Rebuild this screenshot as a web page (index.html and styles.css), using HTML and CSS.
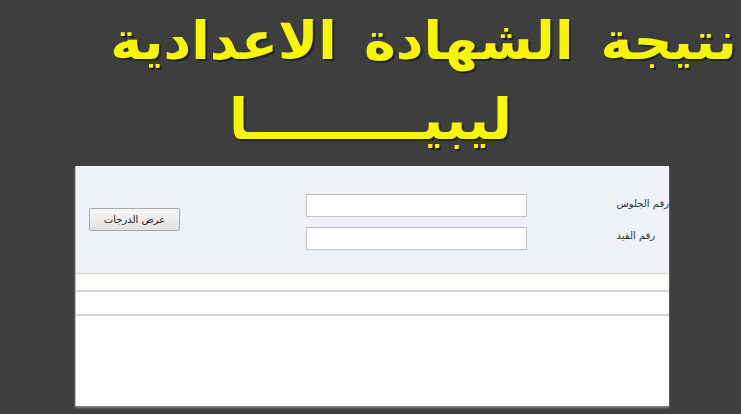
FILE: index.html
```html
<!DOCTYPE html>
<html lang="ar">
<head>
    <meta charset="UTF-8">
    <title>نتيجة الشهادة الاعدادية ليبيا</title>
    <link rel="stylesheet" href="styles.css">
</head>
<body>
    <div id="header">
        <h1 class="title">نتيجة الشهادة الاعدادية</h1>
        <h2 class="country">ليبيـــــــــا</h2>
    </div>
    <div id="panel">
        <div class="search">
            <div class="btn-col">
                <button class="btn">عرض الدرجات</button>
            </div>
            <div class="input-col">
                <input type="text" class="field">
                <input type="text" class="field">
            </div>
            <div class="label-col">
                <span class="lbl lbl-1">رقم الجلوس</span>
                <span class="lbl lbl-2">رقم القيد</span>
            </div>
        </div>
        <div class="row row-cream"></div>
        <div class="row row-white"></div>
        <div class="result"></div>
    </div>
</body>
</html>
```

FILE: styles.css
```css
*{
    margin: 0;
    padding: 0;
    box-sizing: border-box;
}
body{
    width: 741px;
    height: 414px;
    overflow: hidden;
    background: #3e3e3e;
    font-family: "DejaVu Sans", sans-serif;
}
#header{
    height: 166px;
    direction: rtl;
}
.title{
    font-size: 52px;
    font-weight: bold;
    color: #f6f600;
    text-shadow: 2px 2px 0 #222;
    white-space: nowrap;
    padding: 6px 4px 0 0;
    line-height: 70px;
    word-spacing: 8px;
    transform: scaleX(1.04);
    transform-origin: right center;
}
.country{
    font-size: 56px;
    font-weight: bold;
    color: #f6f600;
    text-shadow: 2px 2px 0 #222;
    text-align: center;
    line-height: 82px;
    padding-top: 3px;
}
#panel{
    width: 594px;
    height: 240px;
    margin-left: 75px;
    background: #fff;
    border-left: 1px solid #bbb;
    box-shadow: 0 2px 2px #888;
}
.search{
    height: 108px;
    background: #eef1f6;
    display: flex;
    border-bottom: 1px solid #dcd9c6;
}
.btn-col{
    padding: 42px 0 0 13px;
}
.btn{
    width: 91px;
    height: 23px;
    font-family: "DejaVu Sans", sans-serif;
    font-size: 10px;
    color: #222;
    background: linear-gradient(#f6f6f6, #e2e2e2);
    border: 1px solid #a9a9a9;
    border-radius: 2px;
}
.input-col{
    padding: 28px 0 0 126px;
    display: flex;
    flex-direction: column;
    gap: 10px;
}
.field{
    width: 221px;
    height: 23px;
    background: #fff;
    border: 1px solid #c6c6c6;
    border-top-color: #b8b8b8;
}
.label-col{
    margin-left: auto;
    padding-top: 32px;
    display: flex;
    flex-direction: column;
    align-items: flex-end;
    gap: 21px;
    font-size: 10px;
    color: #333;
    direction: rtl;
}
.row{
    border-bottom: 2px solid #d4d4d4;
}
.row-cream{
    height: 18px;
    background: #fdfdf6;
}
.row-white{
    height: 24px;
    background: #fff;
}
```
